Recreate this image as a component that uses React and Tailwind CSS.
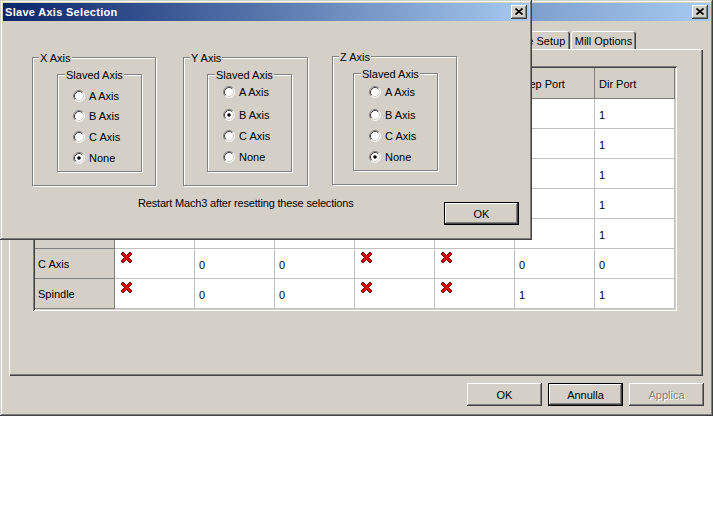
import React from "react";

const RAISED =
  "shadow-[inset_-1px_-1px_#404040,inset_1px_1px_#d4d0c8,inset_-2px_-2px_#808080,inset_2px_2px_#ffffff]";
const BTN =
  "shadow-[inset_-1px_-1px_#404040,inset_1px_1px_#ffffff,inset_-2px_-2px_#808080,inset_2px_2px_#d4d0c8]";
const BTN_DEFAULT =
  "shadow-[inset_0_0_0_1px_#000000,inset_-2px_-2px_#404040,inset_2px_2px_#ffffff,inset_-3px_-3px_#808080,inset_3px_3px_#d4d0c8]";

function CloseButton() {
  return (
    <div className={`w-[16px] h-[14px] bg-[#d4d0c8] flex items-center justify-center ${BTN}`}>
      <svg width="8" height="7" viewBox="0 0 8 7" className="mb-[1px]">
        <path d="M0.5 0.5 L7.5 6.5 M7.5 0.5 L0.5 6.5" stroke="#000" strokeWidth="1.7" />
      </svg>
    </div>
  );
}

function TitleBar({ title }) {
  return (
    <div className="h-[18px] flex items-center bg-[linear-gradient(to_right,#0a246a,#a6caf0)] pl-[2px] pr-[2px]">
      <span className="flex-1 text-white font-bold text-[11px] leading-[14px] tracking-[0.3px] whitespace-nowrap">
        {title}
      </span>
      <CloseButton />
    </div>
  );
}

function Button({ children, def, disabled }) {
  return (
    <div
      className={`w-[75px] h-[23px] bg-[#d4d0c8] flex items-center justify-center leading-[14px] ${
        def ? BTN_DEFAULT : BTN
      } ${disabled ? "text-[#808080] [text-shadow:1px_1px_#ffffff]" : "text-black"}`}
    >
      {children}
    </div>
  );
}

function Radio({ checked }) {
  return (
    <svg width="12" height="12" viewBox="0 0 12 12" className="shrink-0">
      <circle cx="6" cy="6" r="5" fill="#ffffff" />
      <path d="M9.89 2.11 A5.5 5.5 0 0 0 2.11 9.89" fill="none" stroke="#808080" strokeWidth="1" />
      <path d="M2.11 9.89 A5.5 5.5 0 0 0 9.89 2.11" fill="none" stroke="#ffffff" strokeWidth="1" />
      <path d="M9.18 2.82 A4.5 4.5 0 0 0 2.82 9.18" fill="none" stroke="#404040" strokeWidth="1" />
      <path d="M2.82 9.18 A4.5 4.5 0 0 0 9.18 2.82" fill="none" stroke="#d4d0c8" strokeWidth="1" />
      {checked && <circle cx="6" cy="6" r="1.8" fill="#000000" />}
    </svg>
  );
}

function GroupLabel({ children, inner }) {
  return (
    <span
      className={`absolute -top-[7px] ${
        inner ? "left-[7px]" : "left-[6px]"
      } bg-[#d4d0c8] px-[1px] leading-[14px] whitespace-nowrap`}
    >
      {children}
    </span>
  );
}

const ETCH = "border border-[#808080] shadow-[inset_1px_1px_#ffffff,1px_1px_#ffffff]";

function AxisGroup({ label, selected, outerClass, innerClass, rowMt }) {
  const opts = ["A Axis", "B Axis", "C Axis", "None"];
  return (
    <div className={`relative shrink-0 ${ETCH} ${outerClass}`}>
      <GroupLabel>{label}</GroupLabel>
      <div className={`relative w-[85px] h-[98px] ${ETCH} ${innerClass}`}>
        <GroupLabel inner>Slaved Axis</GroupLabel>
        <div className="flex flex-col">
          {opts.map((o, i) => (
            <div key={o} className={`flex items-center gap-[4px] ml-[15px] h-[14px] ${rowMt[i]}`}>
              <Radio checked={o === selected} />
              <span className="leading-[14px] whitespace-nowrap">{o}</span>
            </div>
          ))}
        </div>
      </div>
    </div>
  );
}

function RedX() {
  return (
    <svg width="13" height="13" viewBox="0 0 13 13">
      <path
        d="M1 3 L3 1 L6.5 4.5 L10 1 L12 3 L8.5 6.5 L12 10 L10 12 L6.5 8.5 L3 12 L1 10 L4.5 6.5 Z"
        fill="#d81010"
        stroke="#700000"
        strokeWidth="1"
        strokeLinejoin="round"
      />
    </svg>
  );
}

function GreenCheck() {
  return (
    <svg width="13" height="13" viewBox="0 0 13 13">
      <path d="M1.5 7 L5 10.5 L11.5 2.5" fill="none" stroke="#008000" strokeWidth="2.5" />
    </svg>
  );
}

const HEADERS = [
  "Signal",
  "Enabled",
  "Step Pin#",
  "Dir Pin#",
  "Dir LowActive",
  "Step Low Active",
  "Step Port",
  "Dir Port",
];

const ROWS = [
  ["X Axis", true, "2", "3", false, false, "1", "1"],
  ["Y Axis", true, "4", "5", false, false, "1", "1"],
  ["Z Axis", true, "6", "7", false, false, "1", "1"],
  ["A Axis", false, "8", "9", false, false, "1", "1"],
  ["B Axis", false, "0", "0", false, false, "1", "1"],
  ["C Axis", false, "0", "0", false, false, "0", "0"],
  ["Spindle", false, "0", "0", false, false, "1", "1"],
];

function MotorTable() {
  return (
    <div className="ml-[24px] mt-[17px] w-[644px] p-[2px] shadow-[inset_1px_1px_#808080,inset_-1px_-1px_#ffffff,inset_2px_2px_#404040,inset_-2px_-2px_#d4d0c8]">
      <div className="flex">
        {HEADERS.map((h) => (
          <div
            key={h}
            className="w-[80px] h-[31px] bg-[#d4d0c8] border-r border-b border-[#808080] pl-[4px] pr-[2px] flex items-center pt-[1px] leading-[12px]"
          >
            {h}
          </div>
        ))}
      </div>
      {ROWS.map((r) => (
        <div key={r[0]} className="flex">
          {r.map((c, i) =>
            i === 0 ? (
              <div
                key={i}
                className="w-[80px] h-[30px] bg-[#d4d0c8] border-r border-b border-[#808080] pl-[3px] flex items-center pt-[1px]"
              >
                {c}
              </div>
            ) : typeof c === "boolean" ? (
              <div
                key={i}
                className="w-[80px] h-[30px] bg-white border-r border-b border-[#c0c0c0] pl-[5px] pt-[2px] flex items-start"
              >
                {c ? <GreenCheck /> : <RedX />}
              </div>
            ) : (
              <div
                key={i}
                className="w-[80px] h-[30px] bg-white border-r border-b border-[#c0c0c0] pl-[4px] pt-[3px] flex items-center text-black"
              >
                {c}
              </div>
            )
          )}
        </div>
      ))}
    </div>
  );
}

const TAB = "h-[18px] flex items-center justify-center pt-[2px] bg-[#d4d0c8] rounded-t-[3px] whitespace-nowrap shadow-[inset_1px_1px_#ffffff,inset_-1px_0_#404040,inset_-2px_0_#808080]";

function MainWindow() {
  const tabs = [
    ["Port Setup and Axis Selection", "w-[156px]"],
    ["Motor Outputs", "w-[80px]"],
    ["Input Signals", "w-[74px]"],
    ["Output Signals", "w-[82px]"],
    ["Encoder/MPG's", "w-[91px]"],
    ["Spindle Setup", "w-[78px]"],
  ];
  return (
    <div className={`w-[713px] h-[416px] bg-[#d4d0c8] p-[3px] flex flex-col ${RAISED}`}>
      <TitleBar title="Engine Configuration... Ports & Pins" />
      <div className="ml-[6px] mt-[10px] flex h-[18px]">
        {tabs.map(([t, w]) => (
          <div key={t} className={`${TAB} ${w}`}>
            {t}
          </div>
        ))}
        <div className={`${TAB} w-[65px] ml-[1px]`}>Mill Options</div>
      </div>
      <div className="ml-[6px] w-[694px] h-[327px] shrink-0 shadow-[inset_1px_1px_#ffffff,inset_-1px_-1px_#404040,inset_-2px_-2px_#808080]">
        <MotorTable />
      </div>
      <div className="flex justify-end gap-[6px] mt-[7px] pr-[6px]">
        <Button>OK</Button>
        <Button def>Annulla</Button>
        <Button disabled>Applica</Button>
      </div>
    </div>
  );
}

function Dialog() {
  return (
    <div className={`absolute left-0 top-0 w-[532px] h-[240px] bg-[#d4d0c8] p-[3px] ${RAISED}`}>
      <TitleBar title="Slave Axis Selection" />
      <div className="flex items-start mt-[36px] ml-[29px]">
        <AxisGroup
          label="X Axis"
          selected="None"
          outerClass="w-[124px] h-[129px]"
          innerClass="ml-[24px] mt-[16px]"
          rowMt={["mt-[14px]", "mt-[6px]", "mt-[7px]", "mt-[7px]"]}
        />
        <AxisGroup
          label="Y Axis"
          selected="B Axis"
          outerClass="w-[125px] h-[129px] ml-[27px]"
          innerClass="ml-[23px] mt-[16px]"
          rowMt={["mt-[10px]", "mt-[9px]", "mt-[7px]", "mt-[7px]"]}
        />
        <AxisGroup
          label="Z Axis"
          selected="None"
          outerClass="w-[125px] h-[129px] ml-[24px] -mt-[1px]"
          innerClass="ml-[20px] mt-[16px]"
          rowMt={["mt-[11px]", "mt-[9px]", "mt-[7px]", "mt-[7px]"]}
        />
      </div>
      <div className="flex items-start mt-[10px]">
        <div className="ml-[135px] w-[306px] h-[14px] leading-[14px] whitespace-nowrap tracking-[-0.18px]">
          Restart Mach3 after resetting these selections
        </div>
        <div className="mt-[6px]">
          <Button def>OK</Button>
        </div>
      </div>
    </div>
  );
}

export default function App() {
  return (
    <div className="relative w-[713px] h-[512px] bg-white font-['Liberation_Sans',Arial,sans-serif] text-[11px] text-black overflow-hidden">
      <MainWindow />
      <Dialog />
    </div>
  );
}
